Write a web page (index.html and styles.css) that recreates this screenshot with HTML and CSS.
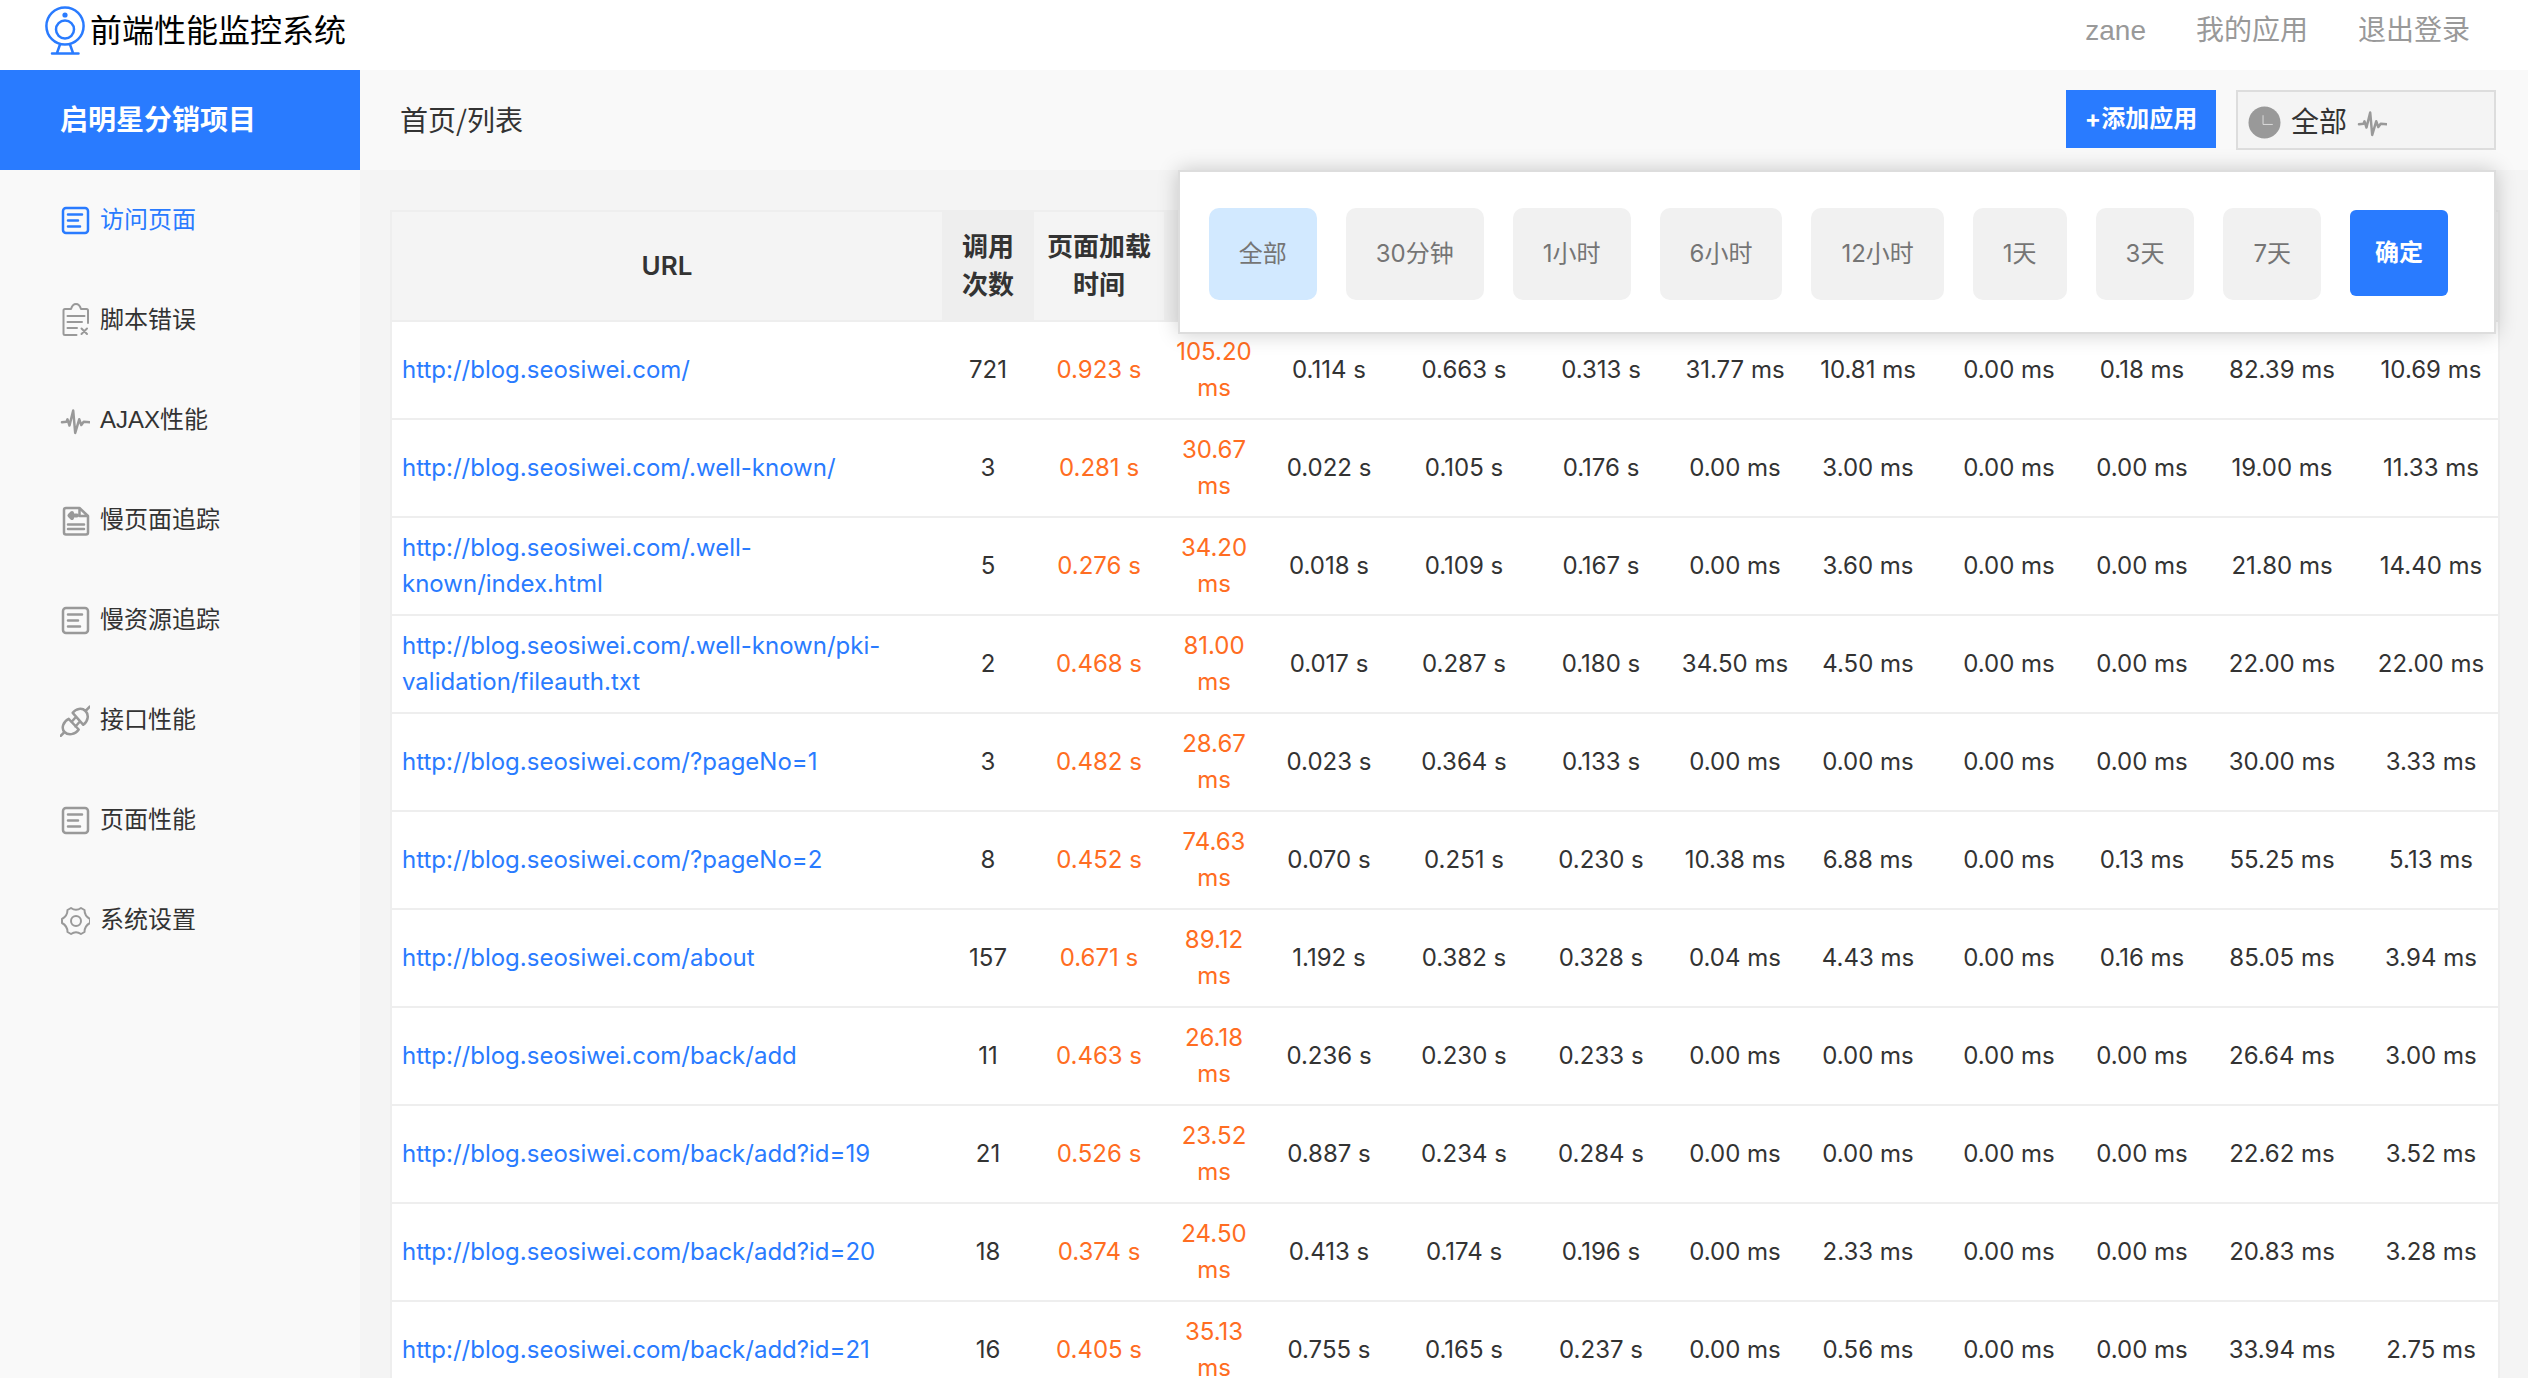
FILE: index.html
```html
<!DOCTYPE html>
<html lang="zh-CN">
<head>
<meta charset="utf-8">
<title>前端性能监控系统</title>
<link rel="stylesheet" href="styles.css">
</head>
<body>
<svg class="sprite" aria-hidden="true">
  <symbol id="i-list" viewBox="0 0 30 34"><rect x="3" y="5" width="25" height="25" rx="3"/><path d="M8 11.500H22M8 17.500H18M8 23.500H20"/></symbol>
  <symbol id="i-clip" viewBox="0 0 30 34"><path d="M28 20V7.500Q28 6 26.500 6H21Q19.500 1 16 1T11 6H5Q3.500 6 3.500 7.500V30.500Q3.500 32 5 32H16.500M7.500 13H24.500M7.500 19H22M7.500 25H17M21.500 25.500L27 31M27 25.500L21.500 31"/></symbol>
  <symbol id="i-pulse" viewBox="0 0 30 34"><path d="M2 19.300L6.500 18.700L7.500 16.300L9.500 22.500L13.200 7.500L15.200 30L19.200 16.300L21.300 22L23.700 18.700L30 19.300"/></symbol>
  <symbol id="i-doc" viewBox="0 0 30 34"><path d="M6 5H19.500L28 13V29.500Q28 31.500 26 31.500H6Q4 31.500 4 29.500V7Q4 5 6 5ZM19.500 5V13H28M8 21.500H24M8 26H24"/><path class="thick" d="M9.500 12.500H17M12 10L9.500 12.500L12 15"/></symbol>
  <symbol id="i-plug" viewBox="0 0 30 34"><path d="M12.700 9.800C16 5.500 22 4.500 25.500 8C29 11.500 28.500 18 23.300 21.800ZM8.700 15.800C3 18.500 1 25.500 4.500 29C8 32.500 15 32 18.700 26.500ZM25.500 8L30 3.500M4.500 29L0.500 33M11.500 19L15 15M15.500 23.500L19 19.500"/></symbol>
  <symbol id="i-gear" viewBox="0 0 30 34"><path d="M11 5Q16 8.500 21 5L24.500 7Q24.500 13 30 16V20Q24.500 23 24.500 29L21 31Q16 27.500 11 31L7.500 29Q7.500 23 2 20V16Q7.500 13 7.500 7Z"/><circle cx="16" cy="18" r="5"/></symbol>
</svg>

<header class="header">
  <a class="brand" href="#">
    <svg class="logo" viewBox="0 0 42 52" aria-hidden="true">
      <circle cx="21" cy="21" r="18.600"/><circle cx="21" cy="24.500" r="9"/><circle class="dot" cx="21" cy="10" r="2.600"/>
      <path d="M16 39.500L13 48M26 39.500L29 48M8 48.500H34.500"/>
    </svg>
    <span>前端性能监控系统</span>
  </a>
  <nav class="account">
    <a href="#">zane</a>
    <a href="#">我的应用</a>
    <a href="#">退出登录</a>
  </nav>
</header>

<div class="layout">
  <aside class="sidebar">
    <h2 class="project">启明星分销项目</h2>
    <nav class="menu">
      <a class="active" href="#"><svg class="icon bold"><use href="#i-list"/></svg>访问页面</a>
      <a href="#"><svg class="icon"><use href="#i-clip"/></svg>脚本错误</a>
      <a href="#"><svg class="icon bold"><use href="#i-pulse"/></svg>AJAX性能</a>
      <a href="#"><svg class="icon bold"><use href="#i-doc"/></svg>慢页面追踪</a>
      <a href="#"><svg class="icon bold"><use href="#i-list"/></svg>慢资源追踪</a>
      <a href="#"><svg class="icon bold"><use href="#i-plug"/></svg>接口性能</a>
      <a href="#"><svg class="icon bold"><use href="#i-list"/></svg>页面性能</a>
      <a href="#"><svg class="icon"><use href="#i-gear"/></svg>系统设置</a>
    </nav>
  </aside>

  <div class="page">
    <div class="toolbar">
      <h1 class="crumb">首页/列表</h1>
      <button class="add" type="button">+添加应用</button>
      <div class="range">
        <button class="range-toggle" type="button" aria-expanded="true">
          <svg class="clock" viewBox="0 0 34 34" aria-hidden="true"><circle cx="17" cy="17" r="16.500"/><path d="M15.500 9.500V19H25.500"/></svg>
          <span>全部</span>
          <svg class="icon bold"><use href="#i-pulse"/></svg>
        </button>
        <div class="range-panel">
          <button class="chip selected" type="button">全部</button>
          <button class="chip" type="button">30分钟</button>
          <button class="chip" type="button">1小时</button>
          <button class="chip" type="button">6小时</button>
          <button class="chip" type="button">12小时</button>
          <button class="chip" type="button">1天</button>
          <button class="chip" type="button">3天</button>
          <button class="chip" type="button">7天</button>
          <button class="confirm" type="button">确定</button>
        </div>
      </div>
    </div>

    <main class="content">
      <table class="data">
        <colgroup>
          <col><col class="w92"><col class="w130"><col class="w100"><col class="w130"><col class="w140"><col class="w134"><col class="w134"><col class="w132"><col class="w150"><col class="w116"><col class="w164"><col class="w134">
        </colgroup>
        <thead>
          <tr><th>URL</th><th>调用次数</th><th>页面加载时间</th><th></th><th></th><th></th><th></th><th></th><th></th><th></th><th></th><th></th><th></th></tr>
        </thead>
        <tbody>
          <tr><td><a href="#">http://blog.seosiwei.com/</a></td><td>721</td><td>0.923 s</td><td>105.20 ms</td><td>0.114 s</td><td>0.663 s</td><td>0.313 s</td><td>31.77 ms</td><td>10.81 ms</td><td>0.00 ms</td><td>0.18 ms</td><td>82.39 ms</td><td>10.69 ms</td></tr>
          <tr><td><a href="#">http://blog.seosiwei.com/.well-known/</a></td><td>3</td><td>0.281 s</td><td>30.67 ms</td><td>0.022 s</td><td>0.105 s</td><td>0.176 s</td><td>0.00 ms</td><td>3.00 ms</td><td>0.00 ms</td><td>0.00 ms</td><td>19.00 ms</td><td>11.33 ms</td></tr>
          <tr><td><a href="#">http://blog.seosiwei.com/.well-known/index.html</a></td><td>5</td><td>0.276 s</td><td>34.20 ms</td><td>0.018 s</td><td>0.109 s</td><td>0.167 s</td><td>0.00 ms</td><td>3.60 ms</td><td>0.00 ms</td><td>0.00 ms</td><td>21.80 ms</td><td>14.40 ms</td></tr>
          <tr><td><a href="#">http://blog.seosiwei.com/.well-known/pki-validation/fileauth.txt</a></td><td>2</td><td>0.468 s</td><td>81.00 ms</td><td>0.017 s</td><td>0.287 s</td><td>0.180 s</td><td>34.50 ms</td><td>4.50 ms</td><td>0.00 ms</td><td>0.00 ms</td><td>22.00 ms</td><td>22.00 ms</td></tr>
          <tr><td><a href="#">http://blog.seosiwei.com/?pageNo=1</a></td><td>3</td><td>0.482 s</td><td>28.67 ms</td><td>0.023 s</td><td>0.364 s</td><td>0.133 s</td><td>0.00 ms</td><td>0.00 ms</td><td>0.00 ms</td><td>0.00 ms</td><td>30.00 ms</td><td>3.33 ms</td></tr>
          <tr><td><a href="#">http://blog.seosiwei.com/?pageNo=2</a></td><td>8</td><td>0.452 s</td><td>74.63 ms</td><td>0.070 s</td><td>0.251 s</td><td>0.230 s</td><td>10.38 ms</td><td>6.88 ms</td><td>0.00 ms</td><td>0.13 ms</td><td>55.25 ms</td><td>5.13 ms</td></tr>
          <tr><td><a href="#">http://blog.seosiwei.com/about</a></td><td>157</td><td>0.671 s</td><td>89.12 ms</td><td>1.192 s</td><td>0.382 s</td><td>0.328 s</td><td>0.04 ms</td><td>4.43 ms</td><td>0.00 ms</td><td>0.16 ms</td><td>85.05 ms</td><td>3.94 ms</td></tr>
          <tr><td><a href="#">http://blog.seosiwei.com/back/add</a></td><td>11</td><td>0.463 s</td><td>26.18 ms</td><td>0.236 s</td><td>0.230 s</td><td>0.233 s</td><td>0.00 ms</td><td>0.00 ms</td><td>0.00 ms</td><td>0.00 ms</td><td>26.64 ms</td><td>3.00 ms</td></tr>
          <tr><td><a href="#">http://blog.seosiwei.com/back/add?id=19</a></td><td>21</td><td>0.526 s</td><td>23.52 ms</td><td>0.887 s</td><td>0.234 s</td><td>0.284 s</td><td>0.00 ms</td><td>0.00 ms</td><td>0.00 ms</td><td>0.00 ms</td><td>22.62 ms</td><td>3.52 ms</td></tr>
          <tr><td><a href="#">http://blog.seosiwei.com/back/add?id=20</a></td><td>18</td><td>0.374 s</td><td>24.50 ms</td><td>0.413 s</td><td>0.174 s</td><td>0.196 s</td><td>0.00 ms</td><td>2.33 ms</td><td>0.00 ms</td><td>0.00 ms</td><td>20.83 ms</td><td>3.28 ms</td></tr>
          <tr><td><a href="#">http://blog.seosiwei.com/back/add?id=21</a></td><td>16</td><td>0.405 s</td><td>35.13 ms</td><td>0.755 s</td><td>0.165 s</td><td>0.237 s</td><td>0.00 ms</td><td>0.56 ms</td><td>0.00 ms</td><td>0.00 ms</td><td>33.94 ms</td><td>2.75 ms</td></tr>
        </tbody>
      </table>
    </main>
  </div>
</div>
</body>
</html>
```
FILE: styles.css
```css
* { box-sizing: border-box; }

body {
  margin: 0;
  height: 100vh;
  display: flex;
  flex-direction: column;
  overflow: hidden;
  background: #f4f4f4;
  color: #333;
  font: 24px/36px Inter, "Noto Sans CJK SC", sans-serif;
}

a { color: inherit; text-decoration: none; }

button {
  margin: 0;
  border: 0;
  font: inherit;
  color: inherit;
  white-space: nowrap;
  cursor: pointer;
}

.sprite { position: absolute; width: 0; height: 0; }

.icon {
  flex: none;
  width: 30px;
  height: 34px;
  overflow: visible;
  fill: none;
  stroke: #999;
  stroke-width: 2;
  stroke-linecap: round;
  stroke-linejoin: round;
}
.icon.bold { stroke-width: 2.5; }
.thick { stroke-width: 4; }

/* Header */
.header {
  flex: none;
  height: 70px;
  padding: 0 58px 8px 44px;
  display: flex;
  align-items: center;
  justify-content: space-between;
  background: #fff;
}

.brand {
  display: flex;
  align-items: center;
  gap: 4px;
  color: #000;
  font-size: 32px;
}

.logo {
  width: 42px;
  height: 52px;
  fill: none;
  stroke: #297bff;
  stroke-width: 2.5;
  stroke-linecap: round;
}
.logo .dot { fill: #297bff; stroke: none; }

.account,
.menu { font-family: "Liberation Sans", "Noto Sans CJK SC", sans-serif; }

.account {
  display: flex;
  gap: 50px;
  color: #999;
  font-size: 28px;
}

/* Sidebar */
.layout { flex: 1; min-height: 0; display: flex; }

.sidebar { flex: none; width: 360px; background: #f9f9f9; }

.project {
  height: 100px;
  margin: 0;
  padding-left: 60px;
  background: #297bff;
  color: #fff;
  font-size: 28px;
  line-height: 100px;
}

.menu a {
  height: 100px;
  padding-left: 60px;
  display: flex;
  align-items: center;
  gap: 10px;
}
.menu .active { color: #297bff; }
.menu .active .icon { stroke: #297bff; }

/* Toolbar */
.page { flex: 1; min-width: 0; display: flex; flex-direction: column; }

.toolbar {
  flex: none;
  height: 100px;
  padding: 20px 32px 0 40px;
  display: flex;
  align-items: flex-start;
  gap: 20px;
  background: #f9f9f9;
}

.crumb {
  flex: 1;
  margin: 0;
  font-family: "Noto Sans CJK SC", sans-serif;
  font-size: 28px;
  font-weight: 400;
  line-height: 58px;
}

.add {
  width: 150px;
  height: 58px;
  padding: 0;
  background: #297bff;
  color: #fff;
  font-weight: 700;
}

.range { position: relative; }

.range-toggle {
  width: 260px;
  height: 60px;
  padding: 4px 10px 0;
  display: flex;
  align-items: center;
  gap: 10px;
  border: 2px solid #ddd;
  background: #f4f4f4;
  font-size: 28px;
}

.clock { width: 33px; height: 33px; fill: #999; }
.clock path { fill: none; stroke: #ddd; stroke-width: 1; }

.range-panel {
  position: absolute;
  top: 80px;
  right: 0;
  z-index: 2;
  height: 164px;
  padding: 0 46px 0 29px;
  display: flex;
  align-items: center;
  gap: 29px;
  border: 2px solid #ddd;
  background: #fff;
  box-shadow: 0 0 20px rgba(0, 0, 0, .2);
}

.chip {
  height: 92px;
  margin-top: 4px;
  padding: 0 30px;
  border-radius: 10px;
  background: #f1f1f1;
  color: #757575;
}
.chip.selected { background: #d2e9ff; }

.confirm {
  height: 86px;
  margin-top: 2px;
  padding: 0 25px;
  border-radius: 6px;
  background: #297bff;
  color: #fff;
  font-weight: 700;
}

/* Table */
.content {
  flex: 1;
  min-height: 0;
  padding: 40px 28px 0 30px;
  overflow-y: auto;
  scrollbar-width: none;
}

.data {
  width: 100%;
  table-layout: fixed;
  border: 2px solid #eee;
  border-spacing: 0;
  background: #fff;
  text-align: center;
}

.w92 { width: 92px; }
.w100 { width: 100px; }
.w116 { width: 116px; }
.w130 { width: 130px; }
.w132 { width: 132px; }
.w134 { width: 134px; }
.w140 { width: 140px; }
.w150 { width: 150px; }
.w164 { width: 164px; }

.data th {
  height: 110px;
  padding: 16px 10px;
  border-bottom: 2px solid #eee;
  background: #f4f4f4;
  font-size: 26px;
  font-weight: 600;
  line-height: 38px;
}
.data th:nth-child(even) { background: #eee; }

.data td {
  height: 98px;
  padding: 12px 10px;
  border-bottom: 2px solid #eee;
}
.data td:first-child { text-align: left; color: #297bff; }
.data td:nth-child(3),
.data td:nth-child(4) { color: #ff6d22; }
.data td:nth-child(4) { padding: 12px 5px; }
```
